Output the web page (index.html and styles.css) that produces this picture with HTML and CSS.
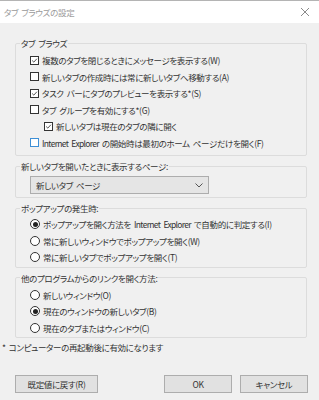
FILE: index.html
```html
<!DOCTYPE html>
<html lang="ja">
  <head>
    <meta charset="UTF-8" />
    <title>タブ ブラウズの設定</title>
    <link rel="stylesheet" href="styles.css">
  </head>
  <body>
    <div class="titlebar">
      <span class="title">タブ ブラウズの設定</span>
      <svg class="close" width="10" height="10" viewBox="0 0 10 10">
        <path d="M1 1 L9 9 M9 1 L1 9" stroke="#8a8a8a" stroke-width="1" fill="none" />
      </svg>
    </div>
    <div class="dialog">
      <fieldset class="group group-tabs">
        <legend>タブ ブラウズ</legend>
        <div class="row"><span class="cb"><svg viewBox="0 0 9 9"><path d="M1.5 4.5 L3.6 6.6 L7.6 2.2" /></svg></span>複数のタブを閉じるときにメッセージを表示する(W)</div>
        <div class="row"><span class="cb"></span>新しいタブの作成時には常に新しいタブへ移動する(A)</div>
        <div class="row"><span class="cb"><svg viewBox="0 0 9 9"><path d="M1.5 4.5 L3.6 6.6 L7.6 2.2" /></svg></span>タスク バーにタブのプレビューを表示する*(S)</div>
        <div class="row"><span class="cb"></span>タブ グループを有効にする*(G)</div>
        <div class="row sub"><span class="cb"><svg viewBox="0 0 9 9"><path d="M1.5 4.5 L3.6 6.6 L7.6 2.2" /></svg></span>新しいタブは現在のタブの隣に開く</div>
        <div class="row"><span class="cb focus"></span><span class="en">Internet Explorer</span> の開始時は最初のホーム ページだけを開く(F)</div>
      </fieldset>

      <fieldset class="group group-page">
        <legend>新しいタブを開いたときに表示するページ:</legend>
        <div class="select">
          <span>新しいタブ ページ</span>
          <svg width="8" height="5" viewBox="0 0 8 5"><path d="M0.5 0.5 L4 4 L7.5 0.5" /></svg>
        </div>
      </fieldset>

      <fieldset class="group group-popup">
        <legend>ポップアップの発生時:</legend>
        <div class="row"><span class="rb on"></span>ポップアップを開く方法を <span class="en">Internet Explorer</span> で自動的に判定する(I)</div>
        <div class="row"><span class="rb"></span>常に新しいウィンドウでポップアップを開く(W)</div>
        <div class="row"><span class="rb"></span>常に新しいタブでポップアップを開く(T)</div>
      </fieldset>

      <fieldset class="group group-links">
        <legend>他のプログラムからのリンクを開く方法:</legend>
        <div class="row"><span class="rb"></span>新しいウィンドウ(O)</div>
        <div class="row"><span class="rb on"></span>現在のウィンドウの新しいタブ(B)</div>
        <div class="row"><span class="rb"></span>現在のタブまたはウィンドウ(C)</div>
      </fieldset>

      <p class="note">* コンピューターの再起動後に有効になります</p>

      <div class="buttons">
        <button class="btn btn-reset">既定値に戻す(R)</button>
        <button class="btn btn-ok">OK</button>
        <button class="btn">キャンセル</button>
      </div>
    </div>
  </body>
</html>
```

FILE: styles.css
```css
* {
  box-sizing: border-box;
}
body {
  margin: 0;
  background-color: #f0f0f0;
  font-family: "Noto Sans CJK JP", "Noto Sans", sans-serif;
  font-size: 8.5px;
  letter-spacing: -0.35px;
  word-spacing: 1.5px;
  font-feature-settings: "palt";
  color: #333333;
  width: 319px;
  height: 400px;
  overflow: hidden;
}
.en {
  letter-spacing: -0.7px;
  word-spacing: 2px;
}
.titlebar {
  height: 23px;
  background-color: #ffffff;
  border-top: 1px solid #b4b4b4;
  display: flex;
  align-items: center;
  justify-content: space-between;
  padding: 0 9px 0 4px;
}
.title {
  color: #9a9a9a;
}
.dialog {
  padding: 14px 12px 0 15px;
}
.group {
  margin: 0;
  padding: 0 0 3px 0;
  border: 1px solid #dcdcdc;
  border-radius: 2px;
}
.group + .group {
  margin-top: 4px;
}
legend {
  margin-left: 4px;
  padding: 0 1px;
  line-height: 12px;
}
.row {
  height: 16.5px;
  display: flex;
  align-items: center;
  padding-left: 14px;
  white-space: pre;
}
.row.sub {
  padding-left: 28px;
}
.group-tabs {
  padding-top: 3px;
  padding-bottom: 4px;
}
.cb {
  width: 9px;
  height: 9px;
  border: 1px solid #333333;
  background-color: #ffffff;
  margin-right: 3px;
  flex: none;
  display: flex;
}
.cb svg {
  width: 7px;
  height: 7px;
}
.cb path {
  fill: none;
  stroke: #222222;
  stroke-width: 1;
}
.cb.focus {
  border-color: #3d8fd6;
}
.rb {
  width: 10px;
  height: 10px;
  border: 1px solid #333333;
  border-radius: 50%;
  background-color: #ffffff;
  margin-right: 3px;
  flex: none;
  display: flex;
  align-items: center;
  justify-content: center;
}
.rb.on::after {
  content: "";
  width: 5px;
  height: 5px;
  border-radius: 50%;
  background-color: #222222;
}
.group-page {
  padding-bottom: 3px;
}
.select {
  margin: 4px 0 0 14px;
  width: 179px;
  height: 18px;
  border: 1px solid #adadad;
  background-color: #e5e5e5;
  display: flex;
  align-items: center;
  justify-content: space-between;
  padding: 0 5px 0 5px;
}
.select path {
  fill: none;
  stroke: #555555;
  stroke-width: 1;
}
.group-popup {
  padding-top: 2px;
  padding-bottom: 1px;
}
.group-links {
  padding-top: 3px;
  padding-bottom: 1px;
}
.note {
  margin: 3px 0 0 -13px;
  line-height: 12px;
}
.buttons {
  display: flex;
  margin-top: 22px;
  margin-right: -1px;
}
.btn {
  height: 18px;
  width: 68px;
  border: 1px solid #adadad;
  background-color: #e1e1e1;
  font: inherit;
  color: inherit;
  letter-spacing: inherit;
  word-spacing: inherit;
  padding: 0;
}
.btn-reset {
  width: 83px;
  margin-right: auto;
}
.btn-ok {
  margin-right: 8px;
}
```
